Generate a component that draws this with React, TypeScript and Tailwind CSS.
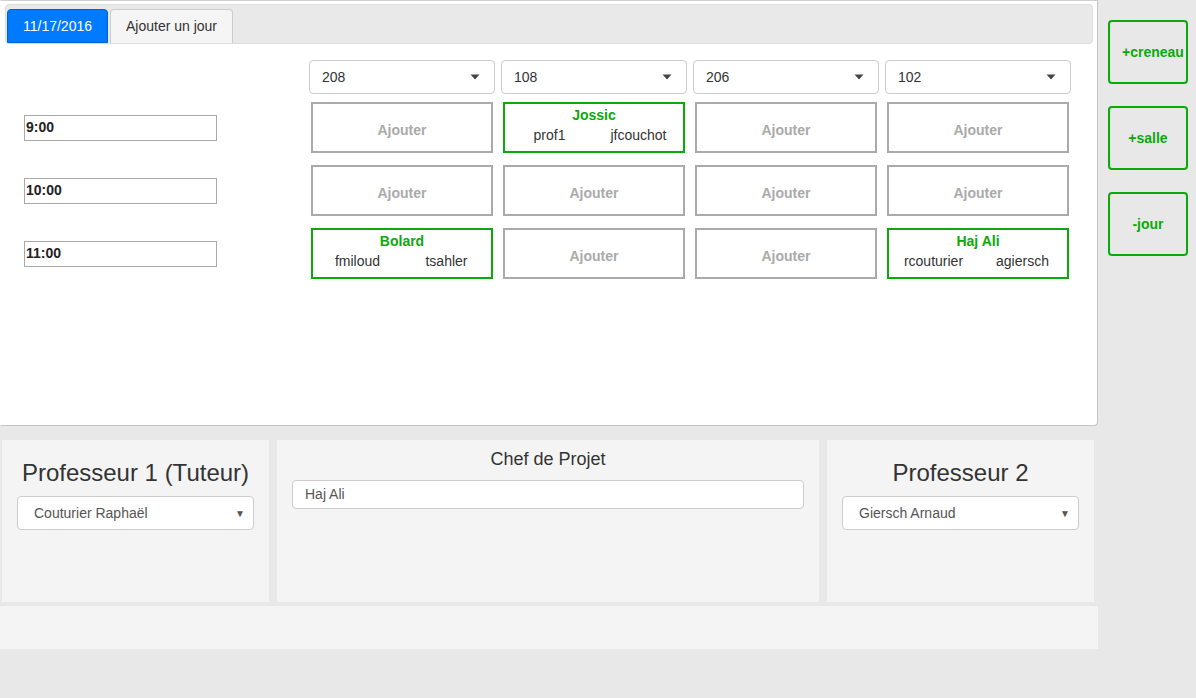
import React from "react";

const font = { fontFamily: '"Liberation Sans", Arial, sans-serif' };

type Cell = null | { name: string; a: string; b: string };

const rooms = ["208", "108", "206", "102"];
const rows: { time: string; cells: Cell[] }[] = [
  { time: "9:00", cells: [null, { name: "Jossic", a: "prof1", b: "jfcouchot" }, null, null] },
  { time: "10:00", cells: [null, null, null, null] },
  {
    time: "11:00",
    cells: [
      { name: "Bolard", a: "fmiloud", b: "tsahler" },
      null,
      null,
      { name: "Haj Ali", a: "rcouturier", b: "agiersch" },
    ],
  },
];

function Caret() {
  return (
    <svg width="10" height="6" viewBox="0 0 10 6" className="shrink-0">
      <path d="M0.5 0.5 L9.5 0.5 L5 5.5 Z" fill="#444" />
    </svg>
  );
}

function SlotCell({ c }: { c: Cell }) {
  if (!c) {
    return (
      <div className="mx-[2px] w-[182px] h-[51px] border-2 border-[#aaaaaa] bg-white flex items-center justify-center pt-[5px]">
        <span className="text-[14px] font-bold text-[#aaaaaa]">Ajouter</span>
      </div>
    );
  }
  return (
    <div className="mx-[2px] w-[182px] h-[51px] border-2 border-[#0aaa0a] bg-white flex flex-col items-center pt-[2px]">
      <div className="text-[14px] font-bold text-[#0aaa0a] leading-[18px]">{c.name}</div>
      <div className="grid grid-cols-2 w-full text-[14px] text-[#333] leading-[22px] text-center">
        <span>{c.a}</span>
        <span>{c.b}</span>
      </div>
    </div>
  );
}

function SideBtn({ label }: { label: string }) {
  return (
    <div className="w-[80px] h-[64px] border-2 border-[#0aaa0a] rounded-[4px] px-3 flex items-center">
      <div className="w-full text-[14px] font-bold text-[#0aaa0a] whitespace-nowrap text-center pt-[1px]">{label}</div>
    </div>
  );
}

function SelectBox({ value, w }: { value: string; w: string }) {
  return (
    <div className={`${w} h-[34px] bg-white border border-[#cccccc] rounded-[4px] flex items-center justify-between pl-[16px] pr-[8px]`}>
      <span className="text-[14px] text-[#555]">{value}</span>
      <span className="text-[10px] text-[#555]">▼</span>
    </div>
  );
}

export default function App() {
  return (
    <div style={font} className="w-[1196px] h-[698px] bg-[#e8e8e8] text-[#333] overflow-hidden">
      <div className="flex">
        {/* main panel */}
        <div className="w-[1098px] h-[426px] bg-white border border-t-[#d0d0d0] border-r-[#c4c4c4] border-b-[#c4c4c4] border-l-transparent rounded-br-[4px] pt-[3px] px-[4px]">
          <div className="h-[40px] bg-[#e9e9e9] border border-[#dddddd] rounded-[4px] flex items-end pl-[1px]">
            <div className="w-[101px] h-[34px] bg-[#007bff] border border-[#0062cc] rounded-t-[4px] flex items-center justify-center text-[14px] text-white">
              11/17/2016
            </div>
            <div className="ml-[2px] w-[123px] h-[34px] bg-[#f5f5f5] border border-[#cccccc] border-b-0 rounded-t-[4px] flex items-center justify-center text-[14px] text-[#333]">
              Ajouter un jour
            </div>
          </div>
          <div className="mt-[16px] flex">
            <div className="w-[304px]" />
            <div className="flex gap-[6px]">
              {rooms.map((r) => (
                <div
                  key={r}
                  className="w-[186px] h-[34px] bg-white border border-[#cccccc] rounded-[4px] flex items-center justify-between pl-[12px] pr-[14px]"
                >
                  <span className="text-[14px] text-[#333]">{r}</span>
                  <Caret />
                </div>
              ))}
            </div>
          </div>
          <div className="mt-[8px] flex flex-col gap-[12px]">
            {rows.map((row) => (
              <div key={row.time} className="flex items-center">
                <div className="w-[304px] pl-[19px]">
                  <div className="w-[193px] h-[26px] border border-[#aaaaaa] flex items-center pl-[1px] text-[14px] font-bold text-[#222]">
                    {row.time}
                  </div>
                </div>
                <div className="flex gap-[6px]">
                  {row.cells.map((c, i) => (
                    <div key={i} className="w-[186px]">
                      <SlotCell c={c} />
                    </div>
                  ))}
                </div>
              </div>
            ))}
          </div>
        </div>
        {/* sidebar */}
        <div className="pl-[10px] pt-[20px] flex flex-col gap-[22px]">
          <SideBtn label="+creneau" />
          <SideBtn label="+salle" />
          <SideBtn label="-jour" />
        </div>
      </div>

      {/* bottom */}
      <div className="w-[1098px] mt-[14px]">
        <div className="flex gap-[8px] px-[2px] h-[162px]">
          <div className="w-[267px] bg-[#f4f4f4] flex flex-col items-center pt-[18px] px-[15px]">
            <div className="text-[24px] leading-[30px] text-[#333]">Professeur 1 (Tuteur)</div>
            <div className="mt-[8px] w-full">
              <SelectBox value="Couturier Raphaël" w="w-full" />
            </div>
          </div>
          <div className="w-[542px] bg-[#f4f4f4] flex flex-col items-center pt-[8px] px-[15px]">
            <div className="text-[18px] leading-[22px] text-[#333]">Chef de Projet</div>
            <div className="mt-[10px] w-full h-[29px] bg-white border border-[#cccccc] rounded-[4px] flex items-center pl-[12px] text-[14px] text-[#555]">
              Haj Ali
            </div>
          </div>
          <div className="w-[267px] bg-[#f4f4f4] flex flex-col items-center pt-[18px] px-[15px]">
            <div className="text-[24px] leading-[30px] text-[#333]">Professeur 2</div>
            <div className="mt-[8px] w-full">
              <SelectBox value="Giersch Arnaud" w="w-full" />
            </div>
          </div>
        </div>
        <div className="mt-[4px] h-[43px] bg-[#f4f4f4]" />
      </div>
    </div>
  );
}
